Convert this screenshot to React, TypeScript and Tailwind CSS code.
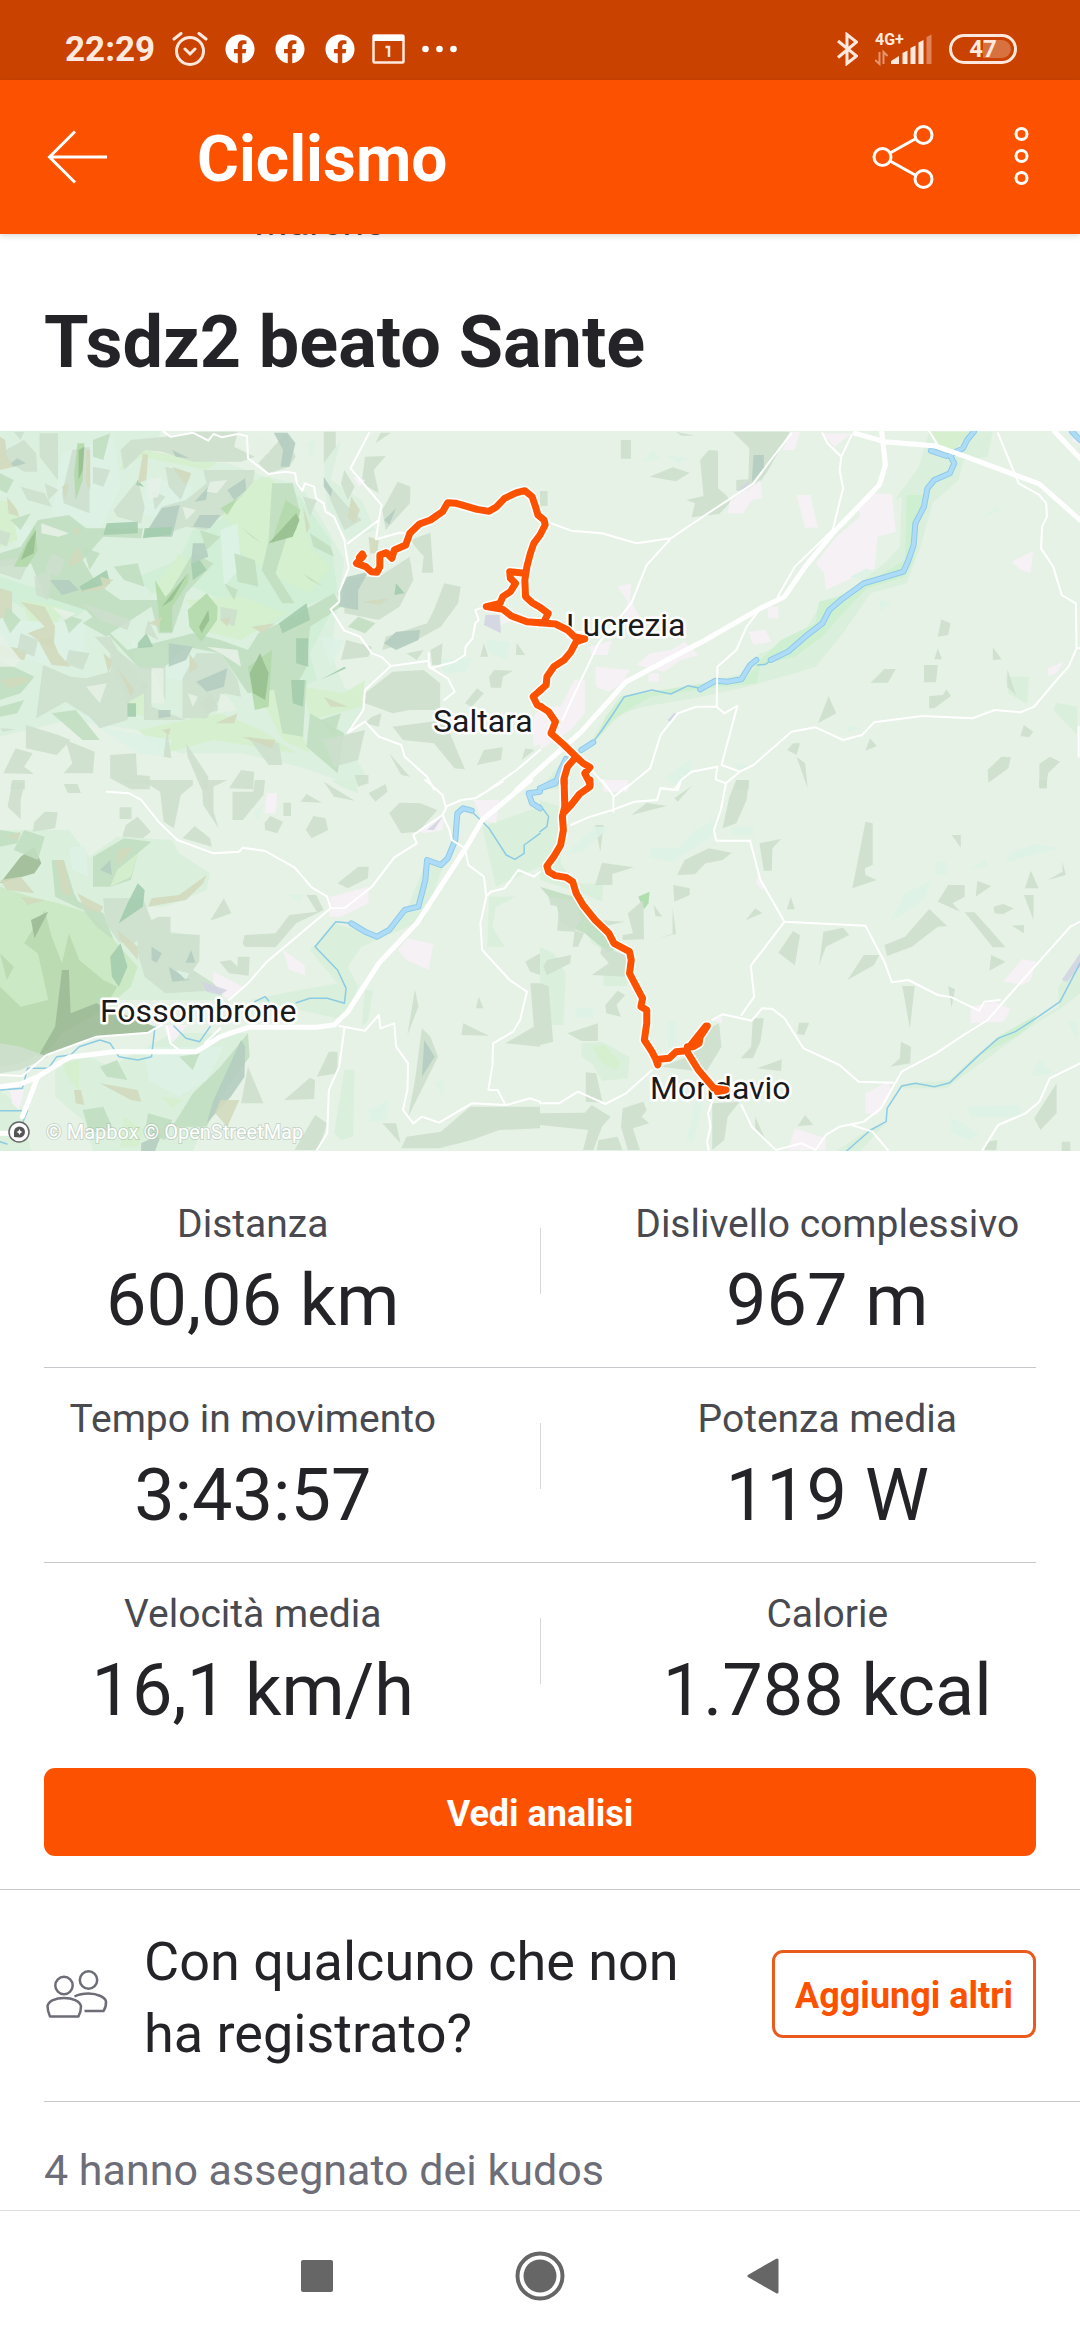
import type { ReactNode } from "react";
import { FaFacebook } from "react-icons/fa";

const stats = [
  [
    { label: "Distanza", value: "60,06 km" },
    { label: "Dislivello complessivo", value: "967 m" },
  ],
  [
    { label: "Tempo in movimento", value: "3:43:57" },
    { label: "Potenza media", value: "119 W" },
  ],
  [
    { label: "Velocità media", value: "16,1 km/h" },
    { label: "Calorie", value: "1.788 kcal" },
  ],
];

/* ---------- Map data ---------- */

// The map is split in four tiles, each drawn in its own units.
type TileId = "nw" | "ne" | "sw" | "se";

const tiles: Record<TileId, string> = {
  nw: "translate(0 -11) scale(0.34439 0.33333)",
  ne: "translate(540 -11) scale(0.34439 0.33333)",
  sw: "translate(0 349) scale(0.34439 0.33333)",
  se: "translate(540 349) scale(0.34439 0.33333)",
};

const FOREST = "#cddfcd";
const SAGE = "#c1dec1";
const TEAL = "#b4cdc0";
const LEAF = "#b3d9ab";
const MOSS = "#a3ccad";
const MINT = "#ddf2e6";
const LIME = "#d5efcd";
const GRASS = "#d8f0da";
const VALLEY = "#cdeecf";
const SAND = "#d2d9bd";
const URBAN = "#f6f1f6";
const LILAC = "#d3d5e2";

const land: { tile: TileId; fill: string; d: string }[] = [
  // north west hills
  { tile: "nw", fill: "#daf0df", d: "M0 33H470L430 110 660 130 770 170 870 190 930 290 1000 420 980 560 960 700 1000 800 1060 850 1000 960 1060 1060 1030 1108 980 1080 870 1040 700 1000 520 1000 400 930 200 900 0 950Z M940 130L990 60 960 180 1050 240 1090 330 1010 360 950 260Z" },
  { tile: "nw", fill: "#cfedd6", d: "M560 330L640 300 760 170 870 230 960 360 980 520 880 560 820 600 700 650 640 540 560 500 440 520 400 470 520 420Z M880 560L960 580 900 700 920 780 880 800 860 640Z M0 470L90 500 300 540 200 600 60 560 0 520Z" },
  { tile: "nw", fill: LIME, d: "M0 240L40 250 60 300 50 360 0 380Z M640 285L700 190 780 170 870 250 900 380 960 440 900 520 780 460 700 400 690 330Z M360 80L420 90 630 130 600 150 410 110 350 150Z M60 540L180 560 160 640 90 620Z M320 650L420 800 430 890 380 880 330 740Z M880 800L1000 820 1060 780 1050 860 900 900Z M450 500L520 400 560 440 520 500 460 560Z M540 540L700 530 830 580 700 660 610 640Z M120 350H190L240 400 170 470 110 440Z M790 700L870 780 860 900 900 1000 820 960 770 860Z M640 880L760 930 860 1000 620 960 480 1000 400 930Z" },
  { tile: "nw", fill: MINT, d: "M180 100L330 50 350 200 290 330 150 280Z M430 170L560 200 510 300 400 280Z M0 600L250 610 240 700 150 740 0 690Z M640 330L690 310 700 440 650 500Z M380 660L560 700 700 740 640 800 400 760Z M180 850L330 930 500 960 480 1010 400 1000Z M1270 720L1370 715 1355 755 1290 760Z M890 70L915 60 905 120Z M930 650L1000 660 960 740Z M1410 660L1480 665 1470 720 1420 700Z M40 300L100 330 60 400Z" },
  { tile: "nw", fill: SAGE, d: "M110 300L200 285 250 325 415 325 410 355 300 350 240 420 280 490 350 540 480 540 560 400 620 430 540 520 500 640 460 640 440 560 320 640 370 690 560 640 640 660 720 690 750 640 830 600 970 520 990 560 900 620 890 740 860 800 720 820 640 700 540 680 460 760 400 740 320 650 250 570 130 530 90 430 0 440V400L60 380Z M790 190L850 190 870 270 830 360 800 460 855 550 820 550 760 450 780 360Z M680 400L740 420 750 500 690 485Z M150 880L220 870 290 960 240 960Z M0 720L100 770 60 820 0 840Z M790 780L890 780 880 950 820 940Z M240 610L300 570 360 600 310 650Z M900 880L1000 940 980 1060 890 980Z" },
  { tile: "nw", fill: FOREST, d: "M115 40H168V180L115 110Z M0 100L70 60 105 100 108 155H70L0 110Z M350 90L380 60 480 50 560 35 690 35 680 80 740 110 700 125 560 125 470 95 420 90 360 150Z M480 140L555 160 525 240 490 200Z M590 150L740 150 735 185 700 230 640 290 600 330 540 320 470 345 420 345 470 260 540 240 600 190Z M330 270L400 180 420 260 410 310 340 290Z M180 220L210 90 260 80V280L185 250Z M750 130L830 40 858 110 840 140 780 160Z M60 200L130 220 150 260 80 240Z M940 35H975V80L940 130Z M1060 110L1120 108 1085 150 1100 220 1050 190Z M1090 70L1135 38H1105Z M1110 270L1155 185 1192 200 1190 250 1120 330Z M1190 360L1250 338 1258 458H1225L1230 410Z M100 470L150 450 140 540 105 525Z M960 240L1000 330 1050 300 1010 260 950 190Z M0 420L90 410 60 480 0 460Z" },
  { tile: "nw", fill: FOREST, d: "M1290 490L1338 500 1330 550 1280 620 1210 660 1110 690 1120 650 1240 610 1260 570Z M1000 470L1100 470 1190 410 1200 480 1160 560 1100 600 1000 580Z M1060 850V820L1140 755 1230 750 1278 790V870H1190L1140 880Z M1250 690L1285 670 1280 735 1255 735Z M1350 850L1385 805 1405 820 1370 860Z M1420 770L1435 750 1490 752 1460 770 1455 803H1425Z M1405 670L1418 710 1395 710Z M1500 668L1525 705H1498Z M1385 1035L1405 990 1460 982 1455 1020Z M1515 1020L1525 985 1552 990Z M1140 920L1290 900 1350 1048 1320 1045 1260 970 1170 960Z M1080 890L1108 880 1100 920 1060 910Z M1130 1000L1190 1070 1165 1065Z M1005 660L1080 680 1070 710 990 720Z" },
  { tile: "nw", fill: FOREST, d: "M125 735L205 770 250 775 320 755V700L275 650H320L340 690 400 740 480 740V840L440 735V860L540 900H418V820L375 845 370 900 290 925 260 890 190 845 105 895Z M530 775L570 700 640 700 690 780 700 830 650 820 600 895H530Z M75 915L170 945 205 960 165 1005 75 985Z M190 960L275 995 270 1060 185 1060 210 1030Z M10 1060L45 985 95 1000 70 1040 98 1062Z M320 1005L395 1000 398 1065 435 1068V1108H380L320 1075Z M540 970L605 1070 605 1108H585L545 1010Z M665 1105L700 1050 738 1055 735 1108Z M30 1108L35 1080H72V1108Z M485 930L498 1015 475 1010Z M720 950L810 970 820 1035 780 1035Z M940 960L1060 930 1040 1020 970 1040Z M1030 1065H1070V1090L1040 1100Z M240 550L380 600 370 630 290 600Z" },
  { tile: "nw", fill: TEAL, d: "M795 38H835L858 70 840 140H815L822 90Z M435 320L470 265 522 255 500 350 415 350Z M565 245L605 200 598 240Z M660 210L712 175 715 210 680 240Z M560 320L580 285 640 285 610 325Z M985 560L980 520 1010 470 1070 455 1040 510 1040 570Z M1115 670L1150 635 1220 630 1215 660 1150 690Z M145 480L200 480 230 510 180 525Z M25 135L50 115 75 130 40 140Z M560 370L595 370 605 410 555 430Z M570 785L660 745 650 800 600 815Z M460 870H495V890L460 895Z M500 90L550 115 510 110Z M940 170L965 210 960 230 940 200Z M490 670L560 680 540 720 490 740Z M1115 300L1150 265 1130 315Z" },
  { tile: "nw", fill: MOSS, d: "M310 310L400 305V340L300 345Z M420 325L500 320 495 345 415 355Z M230 500L310 450 320 490 240 515Z M555 430L580 420 600 450 560 480Z M810 610L890 550 900 600 820 640Z M860 655H895V740L860 730Z M845 780H885L880 860 850 850Z M370 850H395V890H370Z M400 670L425 640 445 680 400 685Z M930 780L1000 740 1005 745Z M1150 490L1175 520 1145 525Z M400 180L418 200 395 195Z" },
  { tile: "nw", fill: LEAF, d: "M225 70L245 70 240 180 220 240 215 160Z M640 265L690 235 660 285Z M830 240L872 270 860 330 790 370 800 330Z M450 480L480 530 550 460 545 490 500 560V635H465L460 570Z M545 570L600 520 632 560 630 600 585 665 550 620Z M720 740L790 690 780 860 740 870Z M40 440L100 320 110 390 80 440Z" },
  { tile: "nw", fill: "#97bf90", d: "M780 370L860 280 870 300 850 350Z M755 700L780 760 770 840 735 820 725 760Z M470 560L545 460 500 540Z M578 620L605 570 608 600 585 640Z M228 90L245 80 240 150 228 180Z M80 370L105 330 98 400 60 420Z" },
  { tile: "nw", fill: SAND, d: "M0 50L15 60 20 110 40 140 0 150Z M415 100L430 105 425 180 400 190Z M250 90H262V210L250 190Z M180 200L200 190 190 240Z M500 140L555 160 540 195Z M0 505L35 515V595H0Z M60 545L130 560 160 620 155 690 80 640 130 620Z M0 675L80 690 70 720 0 710Z M205 410L230 380 240 420 200 440Z M1020 230L1045 270 1030 310 1010 290Z M1070 350L1100 360 1095 400 1075 400Z M225 515L320 490 300 510Z M625 910L690 880 680 910Z M700 950L800 960 790 985Z M940 830L1010 860 960 860Z M340 740L390 810 380 830Z M550 700L575 740 550 760Z M1050 545L1130 535 1100 555Z M20 230L50 270 55 290 25 280Z" },
  // loose woods scattered over the hills
  { tile: "nw", fill: SAGE, d: "M0 160L40 180 20 220 0 210Z M270 60L320 40 300 120 270 110Z M30 300L90 280 60 330Z M700 320L760 370 730 350Z M900 340L960 380 970 410 910 380Z M650 490L690 510 680 540Z M880 460L940 500 900 480Z M180 580L240 600 200 640Z M20 560L60 600 30 640 10 600Z M330 440L400 430 420 500 360 480Z M580 330L640 350 600 390Z M930 900L990 880 970 950Z M0 860L70 840 50 880 0 890Z M240 380L290 400 260 450Z M1040 590L1090 610 1060 640 1010 620Z" },
  { tile: "nw", fill: FOREST, d: "M40 35H70L60 60Z M130 190L170 210 140 240Z M270 140L320 150 300 200 270 190Z M440 210L480 230 450 270Z M0 330L30 340 20 380 0 370Z M150 400L190 420 170 470 130 450Z M430 600L460 660 420 640Z M640 560L690 570 680 620 640 600Z M200 690L260 700 240 750 190 730Z M60 640L110 660 100 710 50 690Z M580 850L610 820 640 870 600 880Z M0 925L45 928 10 935Z M880 230L920 240 900 290Z M400 780L430 790 420 820Z M1180 700L1230 690 1210 720Z M1000 150L1030 200 1010 240 990 190Z" },
  { tile: "nw", fill: "#e6f1e6", d: "M740 50L790 60 780 100 745 110Z M430 180L470 170 460 230 430 240Z M610 185L660 180 630 220 600 215Z M530 260L570 270 540 300Z M120 310L200 340 170 350 120 340Z M250 800L310 790 290 850Z M640 820L660 830 690 870 630 880Z M545 820L575 830 560 860Z M150 560L220 580 190 600Z M0 640L60 720 40 740 0 740Z M600 680L690 690 700 740 640 700Z M1190 400L1230 405 1225 430 1190 425Z M440 745H475V850H440Z" },
  { tile: "nw", fill: SAND, d: "M110 660L150 650 170 700 205 740 150 735Z M430 610L470 590 460 620Z M210 320L235 330 220 350Z M0 780L60 770 90 780 30 805Z M300 700L325 720 315 760Z M880 260L900 320 890 340Z M640 600L670 590 660 620Z M730 620L800 610 760 640Z M470 930L495 925 490 945Z M290 470L330 480 300 500Z" },
  { tile: "nw", fill: URBAN, d: "M1025 170L1060 180 1045 200Z M1455 575L1490 600 1455 615Z M1545 900L1568 860V970L1550 980Z" },
  { tile: "nw", fill: LILAC, d: "M1410 585H1450L1455 640 1405 615Z" },

  // north east plain
  { tile: "ne", fill: GRASS, d: "M1130 35H1315L1300 110 1230 120 1215 180 1140 250 1105 380 1065 490 960 520 880 640 800 740 740 760 600 800 470 830 300 860 240 880 180 940 120 1000 60 1108H0L60 1030 150 960 230 830 470 790 590 760 640 700 760 650 810 560 900 510 1000 430 1045 380 1050 230 1030 240 1100 140Z M1350 770H1420L1415 852 1360 820Z M1500 848L1560 860V945L1490 870Z" },
  { tile: "ne", fill: VALLEY, d: "M1065 225H1115L1095 310 1085 420 1060 470 950 505 870 590 820 650 740 710 620 740 700 660 800 610 810 545 900 520 1060 420Z M240 830L420 800 600 770 640 730 630 790 480 805 320 830 210 900 165 960 190 890Z" },
  { tile: "ne", fill: LIME, d: "M1135 35H1245L1200 95 1160 80Z" },
  { tile: "ne", fill: FOREST, d: "M235 60H264V116H235Z M560 35H725L660 155 640 185 610 210 570 212V180L605 178 608 85Z M318 170L385 142 435 158 395 184Z M465 120L490 90 517 92V205L540 225 555 245 520 282 440 292 450 250 425 240 475 228Z M0 213H22V258H0Z M395 35L450 47H410Z M1165 598L1192 610 1185 645 1155 650Z M1155 685L1167 718H1145Z M1315 682L1340 718 1315 720Z M960 788L1000 747H1033L1010 788Z M1115 735H1155L1150 787H1115Z M1130 828L1170 825 1180 808 1193 828 1145 865H1130Z M838 828L860 880 807 910Z M735 970L755 970 745 1005 718 990Z M745 1010L770 1030 777 1105Z M958 955L978 978 945 992Z M1405 915L1432 935 1420 952 1395 948Z M1300 1050L1340 1010 1367 1012 1360 1045 1302 1088Z M1450 1032L1480 1010 1510 1025 1475 1060 1470 1105H1450Z M1357 748L1382 825 1357 800Z M570 1080H606V1108H570Z" },
  { tile: "ne", fill: TEAL, d: "M620 105H650V145L615 185Z" },
  { tile: "ne", fill: URBAN, d: "M730 35H755L740 90H705Z M820 40H905L855 80Z M640 180L645 235 615 240 590 280H545L550 245Z M745 225H785L807 323H769Z M960 220L1022 222 1033 335 980 350 972 445 830 510 825 460 800 430 860 350 930 290 920 255Z M225 500L265 490 262 540 290 590 240 605 255 545Z M660 560H692V595H664Z M605 635L655 630 672 665 620 675Z M145 680L210 660 195 705H150Z M280 735L320 700 380 690 420 665 460 705 410 720 360 755Z M160 740L260 750 240 790 200 815 162 800Z M315 760H345V785H315Z M130 780V880L90 930 0 990V860H60L100 780Z M1370 425L1432 393 1425 458 1395 450Z M1475 745L1520 725 1500 760 1475 768Z M175 1085L240 1090 200 1108Z M1540 60L1568 50V75Z" },
  { tile: "ne", fill: LILAC, d: "M370 900L390 878 400 882 380 908Z M570 212L610 180 600 205Z" },
  { tile: "ne", fill: MINT, d: "M295 125L330 90 350 118Z M360 105L430 115 400 128Z M1290 290L1325 258 1338 270Z M900 470L950 445 965 455 935 480Z M985 540L1020 545 990 575Z M360 1075L440 1015 435 1070 400 1095Z M560 1030L610 1040 580 1050Z M890 915L930 925 895 935Z" },

  // south west, Fossombrone hills
  { tile: "sw", fill: GRASS, d: "M0 150H200L260 230 340 170 500 180 520 220 610 280 600 330 480 380H400L420 440 580 470V540L560 570 650 630 640 660H300L150 800 60 860 0 880Z M160 870L240 820 320 860 500 760H720L660 920 600 1010 560 1113H270L240 1020 160 950Z M970 430L1100 470 1180 390 1240 240 1290 250 1230 420 1050 500 1010 560 1040 620 1000 720 870 690 730 660 820 640 980 610 940 560 900 510Z M1400 140L1568 80V260L1440 320Z M1420 350H1500L1440 380 1430 440 1465 500H1415Z M0 930L60 980 90 1113H0Z M1000 870H1030L1025 1070 990 1080 970 1060Z M1060 630H1083L1070 720 1050 740Z M960 0H1030L1040 40 990 20Z" },
  { tile: "sw", fill: "#cae8c2", d: "M0 320L90 350 170 370 260 400 330 480 400 560 380 620 300 690 200 740 130 820 0 850Z" },
  { tile: "sw", fill: "#b9d9b0", d: "M130 390L150 470 180 550 200 460 230 540 300 600 340 620 300 690 180 760 150 800 60 850 0 860V620L60 680 140 660 110 520 70 490Z M0 520L40 560 20 600Z" },
  { tile: "sw", fill: "#9dba96", d: "M180 570H200L205 700 280 670 450 740 430 760 280 770 150 820 110 830 160 740Z M60 230L100 200 120 250 100 280 0 310 30 270Z M90 420L140 395 100 475Z" },
  { tile: "sw", fill: SAGE, d: "M270 230L360 175 440 185 400 220 380 300 320 320 270 320Z M70 150L130 170 110 240 40 210Z M150 240H185L215 340 240 390 160 350Z M560 940L640 860 720 760 725 830 660 920 600 1040 500 1040Z M0 150L60 160 50 190 0 200Z M220 360L300 400 330 480 280 440Z" },
  { tile: "sw", fill: FOREST, d: "M300 355H415L445 435 385 495 345 485 305 425Z M400 440L460 410H495V460L580 465 578 545 560 570 650 630 480 640 420 590 400 520Z M0 790L60 800 140 830 60 870 0 880Z" },
  { tile: "sw", fill: TEAL, d: "M440 500L470 520 455 548 440 540Z M490 560L550 600 500 605Z M555 510L567 548H539Z M700 780L712 800 710 890 670 950 600 1030 620 960Z M410 1090L470 1060 450 1113H410Z M290 270L320 240 325 285Z" },
  { tile: "sw", fill: MOSS, d: "M345 430L370 370 400 310 420 330 415 380Z M320 530L350 490 370 560 345 620 325 590Z" },
  { tile: "sw", fill: SAND, d: "M440 355L520 345 600 285 590 310 540 360 430 380Z M160 240L185 240 210 350 180 340Z M225 340L300 380 290 400 245 385Z M215 930H235L245 975 220 970Z M290 910L400 930 410 965 380 960Z M640 960H695L660 1040 625 1000Z M340 210L390 200 340 260Z M340 450L400 500 400 540 350 480Z M60 350L130 360 80 375Z M20 170L60 155 50 180Z M0 300L60 290 100 340 20 330Z" },
  { tile: "sw", fill: LIME, d: "M340 270L400 220 380 290 320 320Z M470 950L530 960 500 985Z M180 850L230 840 230 930 200 900Z M360 1010L420 1050 400 1100 350 1100Z" },
  { tile: "sw", fill: MINT, d: "M420 800L650 800 600 900 520 950 430 900Z M200 200L250 200 255 290 210 270Z M735 100L765 70 750 120Z M835 345L880 345 870 370Z M1265 910L1290 900 1285 950Z M1070 990L1130 960 1120 1020 1075 1030Z M510 570L550 580 540 600Z" },
  { tile: "sw", fill: SAGE, d: "M290 860L340 840 370 900 310 890Z M240 990L300 980 330 1050 260 1060Z M430 1000L500 1020 480 1080 420 1060Z M520 830L580 820 560 870Z" },
  { tile: "sw", fill: FOREST, d: "M35 10H72L60 60V118L22 80Z M185 12H225L235 39H197Z M345 0H560V15L525 45 505 145 475 125 465 35 425 10H370Z M585 0H660L620 20V95L635 145 590 75Z M675 35H735L740 0H770L765 45 705 120H675Z M823 68H845V108H823Z M873 65L890 42 935 68Z M768 130L785 108 822 125 805 160 770 150Z M888 150L910 108 945 115 953 150 905 175Z M940 5L1030 62 970 50Z M1070 40L1120 12 1125 35 1090 65Z M1130 100L1160 68 1220 70 1270 90 1215 155 1165 160Z M100 125L130 95 168 97 160 145 95 155Z M347 82H382V117H347Z M365 135L400 110 438 155 415 175 355 170Z M530 175L565 138 610 175 615 200Z M980 310L1040 260H1071L1068 295 1010 325Z M610 422L650 355 672 400Z M705 490L710 465 800 460 840 405 920 395 890 345H918L940 390 860 430 800 502 710 500Z M637 545L670 540 690 560V530H725L722 587 665 580Z" },
  { tile: "sw", fill: FOREST, d: "M1205 628L1215 680 1183 765Z M1390 650L1404 685H1382Z M1345 730L1420 767 1340 765Z M1225 745L1250 770 1272 830 1185 1010 1205 900Z M920 890L955 815H980V880Z M825 960L900 893 915 900 912 957Z M1525 545L1568 520V585L1540 575Z M1467 790L1550 740 1540 610H1568V800Z M1365 980H1568V1045L1450 1050 1370 1080 1275 1105H1165L1180 1070 1280 1055Z M915 1005L950 1030 925 1110H855Z M1110 1030H1150L1163 1090Z M720 860L765 970H700Z" },
  { tile: "sw", fill: TEAL, d: "M1232 780L1262 830 1225 890Z" },
  { tile: "sw", fill: URBAN, d: "M775 40H805L800 100H768Z M620 575L705 620 660 660 620 610Z M820 510L885 555V585L840 570Z M960 350L1070 320V370L990 410H955Z M1155 510L1185 475 1258 492 1245 570 1180 540Z M1375 60H1450L1440 130 1400 120Z M1215 150L1290 110 1285 150 1230 160Z M30 930H70L55 990 35 970Z M475 735H545L495 795Z" },
  { tile: "sw", fill: LILAC, d: "M585 605L660 630 640 645 600 635Z M1240 150L1285 110 1260 150Z" },

  // south east plain
  { tile: "se", fill: GRASS, d: "M0 60L60 80 60 250 100 310 185 312 180 365 120 340 0 300Z M0 500L40 520 75 580 68 735H30L20 620 0 610Z M185 570H255V618H185Z M120 790L180 785 260 830 255 895 180 903 150 850 120 830Z M130 430L235 480 230 540 150 490Z M1568 540L1505 620 1505 680 1350 780 1260 830 1190 900 1050 912V925H1180L1280 850 1440 730 1520 680 1568 640Z M860 1113L960 1045 1000 1035 930 1113Z" },
  { tile: "se", fill: VALLEY, d: "M1440 705L1330 770 1270 830 1390 765 1435 725Z" },
  { tile: "se", fill: LIME, d: "M150 800L190 795 235 850 220 870 180 850Z" },
  { tile: "se", fill: "#a9dba9", d: "M285 350L318 335 315 370 302 388Z" },
  { tile: "se", fill: SAGE, d: "M0 320L80 345 110 350 150 420 230 500 200 520 130 460 60 430 50 380Z" },
  { tile: "se", fill: FOREST, d: "M550 50L570 0H607L600 60 570 130 530 145Z M160 135H185L175 215Z M180 248L272 262 210 282V315H160Z M265 105L310 68 368 78Z M390 55L445 15 430 30 400 65Z M398 285L420 240 490 205 557 218 530 240 480 250 450 283Z M637 190L700 177 675 205 673 272H650Z M945 125L966 130V255L943 265 945 285 978 300 907 325Z M1195 165H1222V203Z M1185 315H1233V350L1198 370 1220 395 1155 365Z M1270 303L1310 318 1265 350Z M1425 272L1448 325H1408Z M1475 300L1517 275V245L1527 285Z M1405 345H1433V420Z M1317 380L1345 372 1375 385 1345 403 1320 400Z M1233 397H1262L1352 502H1315Z M1000 495L1060 470 1130 387 1182 438 1155 440 1080 500 1008 528Z M1370 437L1405 435V460Z M1310 525L1352 545 1305 572Z M387 315L435 325V345L390 365Z M728 350L740 388H717Z M598 420L625 385 645 400Z M735 453L755 465 740 556 692 518Z M823 455L880 443 898 465 830 500 810 557Z M893 600L940 525H985L970 555Z M1052 618H1088L1074 746Z M1185 618L1205 628 1195 683Z" },
  { tile: "se", fill: FOREST, d: "M1048 785L1077 800 1075 850 1017 860 1045 835Z M752 728H782L767 766 747 761Z M618 715H650L640 785 618 835H583L613 800Z M80 760L168 730V783H120Z M133 877L163 880 182 968 133 965Z M0 610L25 618 38 785 0 795Z M190 675L225 632 247 645 222 675 235 710 192 700Z M630 865L702 838 700 873Z M500 740L520 730 527 800 480 880 430 870 350 860 430 830Z M770 1005L793 1035 748 1038Z M1435 1015L1500 910V1000L1453 1050Z M1300 1085L1328 1080 1325 1110H1290Z M1515 1085H1540V1113H1515Z M625 1010L653 1075 625 1050Z M0 1000L130 998 150 975 205 1010 180 1040 155 1110H125L140 1050 0 1035Z M240 985L300 965 310 990 295 1010 317 1030 270 1045 290 1110H255L235 1040Z M170 1080L225 1070 240 1110H165Z M500 970L580 965 545 1010 535 1080 500 1110Z M25 350L100 360 120 420 100 450 128 460 110 500H95L100 455 50 452 55 380 30 375Z M255 400L300 360 302 478 240 480V465L270 460Z M170 420L245 425 180 440Z M180 500L260 530 255 590 150 585 200 550 175 520Z M20 540L90 525 88 550 50 570 20 585 10 560Z M345 473L385 462V385L395 462Z M330 375L355 410 335 408Z M1450 0H1472V25H1450Z" },
  { tile: "se", fill: MINT, d: "M75 220L160 140H205L120 215Z M315 230L320 205H400L450 150 510 120 500 165 440 210 380 245Z M555 140H620V165H560Z M1350 250L1370 215 1435 192 1510 205 1430 225Z M1150 245H1180V285H1145Z M1020 420L1060 340 1135 303 1120 350 1060 400Z M1425 890L1450 838 1490 880Z M1240 980L1390 975 1400 1010H1250Z M1190 1010L1275 1060 1250 1080 1195 1060Z M370 725H392L397 785 372 805Z M105 685H155V713H105Z M425 1080L455 945 475 960 445 1085Z M1530 725H1560V780Z M1245 270L1290 237 1300 255Z" },
  { tile: "se", fill: URBAN, d: "M632 280L655 320 645 330 628 310Z M1345 605L1400 537 1440 545 1425 600 1400 615Z M1250 680L1320 665 1367 688 1345 725 1250 730Z M945 940L1010 905 1020 930 980 1005 945 1000Z M740 1045L830 1075V1110H720Z M180 0H255V35H185Z M500 720L528 708V730Z" },
  { tile: "se", fill: LILAC, d: "M1568 520L1515 600 1530 605 1568 560Z" },
];

const streams: { tile: TileId; d: string }[] = [
  { tile: "ne", d: "M670 720L655 733 632 735 M465 805L430 797 380 822 325 810 245 830 210 885 180 930 155 965" },
  { tile: "sw", d: "M1568 160L1522 195V220L1495 238 1470 225 1420 145 1375 100 M1020 430L975 425 915 500 980 570 1005 625 1000 670 950 655H900L860 668 M740 665L770 650 780 662 M505 738L540 775 580 785 610 740 M450 740L440 830 400 840 345 830 320 790 290 780 230 800 205 825 165 830 140 865H80L65 925 0 930 M0 992H80L65 1030 M0 1085L20 1092" },
  { tile: "se", d: "M0 75L25 110 20 140 0 155 M1568 550L1510 665 1440 715 1380 755 1330 775 1280 820 1190 908 1145 920 1090 910 1050 918 1008 985 1005 1025 960 1050 890 1113" },
];

const rivers: { tile: TileId; d: string }[] = [
  { tile: "ne", d: "M1260 35L1240 60 1228 85 1190 105 1203 130 1190 160 1145 180 1125 205 1115 260 1090 310 1085 375 1070 420 1055 455 990 475 940 490 880 535 840 570 820 610 770 650 720 695 670 720 M628 720L610 735 595 760 585 778 545 785 510 782 465 808 M155 967L120 990 M75 1017L60 1050 45 1090 0 1105 M1135 92L1180 108 M1545 35L1568 60" },
  { tile: "sw", d: "M1370 92L1345 85 1328 100 1322 180 1300 235 1280 255 1240 240 1235 300 1215 380 1175 390 1130 450 1095 470 1060 455 1020 430 M1568 35L1535 40 1545 70 1568 85" },
  { tile: "se", d: "M0 25L40 5" },
];

const roads: { tile: TileId; d: string }[] = [
  { tile: "nw", d: "M475 35L495 50 560 38 605 62 620 42 645 52 690 42 717 48 720 115 745 135 780 162 830 155 857 160 862 190 878 212 885 190 912 200 918 235 940 250 945 275 970 290 985 325 1000 360 1005 400 1012 440 M1072 38L1018 145 1108 255 1100 300 1010 370 M1100 300L1092 358 1160 338 1185 340 M1012 445L985 515V545L960 568 1000 632 1045 650 1080 700 1110 712 1135 738 1060 810 1055 870 1010 938 1060 905 1100 950 1165 975 1175 1010 1240 1070 1260 1108 M1135 738L1245 722 1250 745 1320 725 1350 705 1352 680 1372 655 1380 610 1390 600 1380 570 1410 560 M1245 700V740L1300 775 1320 815 1290 840 M1568 990L1500 1050 1420 1108" },
  { tile: "ne", d: "M20 305L90 332 180 340 280 370 380 355 480 285 620 190 670 120 730 40 M380 355L310 435 265 550 170 670 110 800 65 900 M820 40L835 70 875 110 870 150 880 205 850 330 M905 45L875 110 M640 565L600 620 570 690 515 740 513 860H455L400 880 350 945 320 1045 245 1108 M513 860L535 880 573 858 527 1035 580 1055 620 1035 730 935 800 922 880 960 935 945 970 907 1110 888 1255 895 1320 870 1395 877 1435 860 1500 780 1535 740 1558 685 1556 550 1515 525 1490 440 1455 385 1458 320 1472 290 1470 250 1450 225 1390 190 1330 40 M1130 33L1155 75 M580 1055L540 1090 510 1078 515 1040 440 1055 410 1080 400 1110 350 1105 M1558 685H1568 M150 1050L200 1108 M850 330L740 440 690 530 M1564 920V1010" },
  { tile: "sw", d: "M310 35L375 40 410 60 460 125 515 180 620 220 695 215 705 203 770 213 855 262 905 322 950 350 960 385H1000L1080 320 1145 232 1210 190 1200 165 1285 105 M960 385L775 545 720 610 665 660 M1235 0L1285 45 1295 85 1285 105 1305 150 1312 180 1350 205 1360 255 1405 290 1412 350 1395 430 1400 510 1480 600 1530 635 1510 720 1490 755 1432 790 1430 855 1418 930 1445 930 1465 970 M1295 80L1340 60 1380 55 1460 5 M1412 350L1425 335 1465 325 1505 270 1550 290 1568 275 M985 738L1060 752 1100 705 1105 745 1145 730 1150 800 1185 850 1183 930 1170 990 1200 1030 1225 1010 1275 1028 1370 970 1470 975 1540 955 1568 965 M1000 745L985 860 955 930 950 1060 920 1110 M0 885L65 888 135 825 280 770 430 758 470 735 M485 740L495 790 520 810 M595 790L640 745" },
  { tile: "se", d: "M540 10L525 90 505 150 512 182H610L640 300 710 425 945 437 1000 545 1022 607 1070 600 1155 645 1195 652 1275 692 1290 665 1335 660 M710 425L612 557 622 650 585 705 M500 720L530 703 570 712 615 722 645 685 675 687 710 715 765 805 870 855 925 905 1025 908 M1568 425L1540 440 1350 660 1300 720 1230 765 1150 820 1050 875 990 985 940 1025 870 1040 830 1065 800 1110 M905 1035L965 1055 1010 1110 M1568 850L1480 895 1450 965 1410 1000 1330 1035 1285 1110 M325 870L250 940 190 972 110 935 55 970H0 M500 965L488 1000 495 1040 485 1085 490 1110 M585 975L615 1040 685 1110 760 1090 800 1110 M90 135L140 112 210 90 275 65 340 60 350 25 390 30 410 0 M180 0L215 50 250 20 M213 50V95" },
];

const highways: { tile: TileId; d: string }[] = [
  { tile: "nw", d: "M1568 1045L1500 1110" },
  { tile: "ne", d: "M915 40L1000 65 1150 78 1250 115 1450 192 1568 300 M992 33L1003 135 985 195 850 340 770 440 710 530 640 565 480 660 250 785 120 935 0 1045 M1495 35L1568 115" },
  { tile: "sw", d: "M1540 0L1400 120 1355 200 1210 430 1100 550 1010 695 970 735 920 742H720L640 770 570 815H330L200 832 110 890 60 912 0 920 M110 890L65 1010 M0 1060H40" },
];

const route: { tile: TileId; d: string }[] = [
  { tile: "nw", d: "M1052 402L1044 412 1055 408 1035 430 1062 440 1078 455 1095 457 1103 440V405L1122 398 1138 415 1145 390 1178 375 1190 340 1218 312 1250 300 1285 275 1300 248 1325 250 1385 268 1420 274 1440 262 1465 235 1500 218 1524 212 1545 230 1555 260 1562 285 1580 300 1583 315 1568 345 1550 370 1540 400 1530 440 1524 480 1526 530 1545 548 1568 562 1592 580 1582 600 M1524 460L1480 455 1482 475 1497 490 1482 515 1460 530 1452 550 1412 560 1460 568 1485 588 1530 605 1568 608 M1568 812L1548 830 1560 855 1572 860" },
  { tile: "ne", d: "M0 608L45 612 80 630 100 650 130 657 105 665 90 695 70 720 40 740 20 770 18 795 0 812 M2 860L25 875 45 905 32 940 70 975 105 1010 80 1040 70 1075V1090 M105 1010L125 1030 145 1042 130 1060 145 1090V1095" },
  { tile: "se", d: "M70 0L72 80 65 110 68 150 60 195 40 230 20 258 25 275 45 287 75 292 95 305 105 340 125 375 160 420 200 460 215 490 260 515 265 540 260 580 280 620 298 655 293 680 310 690V730L303 780 325 815 335 835 342 855 345 838 375 835 395 815 425 812 482 738 486 738 465 770 462 790 445 800 428 800 M425 812L460 870 505 925 540 930 515 935 M145 0V20L115 42 90 75 72 95" },
];

const places = [
  { name: "Lucrezia", x: 566, y: 205 },
  { name: "Saltara", x: 433, y: 301 },
  { name: "Fossombrone", x: 100, y: 591 },
  { name: "Mondavio", x: 650, y: 668 },
];

function Lines({ items, stroke, width }: { items: { tile: TileId; d: string }[]; stroke: string; width: number }) {
  return (
    <g fill="none" stroke={stroke} strokeWidth={width} strokeLinecap="round" strokeLinejoin="round">
      {items.map((item, i) => (
        <path key={i} d={item.d} transform={tiles[item.tile]} vectorEffect="non-scaling-stroke" />
      ))}
    </g>
  );
}

function RouteMap() {
  return (
    <svg viewBox="0 0 1080 720" className="block w-full" role="img" aria-label="Mappa del percorso">
      <rect width="1080" height="720" fill="#e7f2e7" />
      {land.map((area, i) => (
        <path key={i} d={area.d} fill={area.fill} fillOpacity="0.9" transform={tiles[area.tile]} />
      ))}
      <Lines items={streams} stroke="#8ccbe3" width={1.5} />
      <Lines items={rivers} stroke="#8ccaea" width={6} />
      <Lines items={rivers} stroke="#aedcf7" width={4} />
      <Lines items={roads} stroke="#ffffff" width={2} />
      <Lines items={highways} stroke="#ffffff" width={5} />

      <g className="font-['Roboto']" fontSize="32" fill="#1a1a1a" stroke="#ffffff" strokeWidth="5" strokeLinejoin="round" paintOrder="stroke">
        {places.map((place) => (
          <text key={place.name} x={place.x} y={place.y}>
            {place.name}
          </text>
        ))}
      </g>

      <Lines items={route} stroke="#ffffff" width={10} />
      <Lines items={route} stroke="#fc5200" width={7} />

      {/* Attribution */}
      <circle cx="19" cy="701" r="10" fill="#ffffff" stroke="#666666" strokeWidth="1.5" />
      <path d="M14 706v-5a5.500 5.500 0 1 1 5.500 5.500z" fill="#555555" />
      <path d="M19.500 698l1 2 2 1-2 1-1 2-1-2-2-1 2-1z" fill="#ffffff" />
      <text x="46" y="708" className="font-['Roboto']" fontSize="20" fill="#ffffff" stroke="#9fb3a5" strokeOpacity="0.45" strokeWidth="2" paintOrder="stroke">
        © Mapbox © OpenStreetMap
      </text>
    </svg>
  );
}

/* ---------- Bars ---------- */

function StatusBar() {
  return (
    <div className="flex h-20 items-center justify-between bg-[#ca4200] pt-[18px] pr-[63px] pl-[65px] text-[#ffe9de]">
      <div className="flex items-center gap-[17px]">
        <span className="text-[35px] leading-none font-bold">22:29</span>
        <svg width="36" height="34" viewBox="0 0 36 34" fill="none" stroke="currentColor" strokeWidth="3" strokeLinecap="round">
          <circle cx="18" cy="19" r="13.500" />
          <path d="M2 7L9 1.500M34 7L27 1.500M13 17l5 5 5-5" />
        </svg>
        <div className="flex gap-5 text-white">
          <FaFacebook size={30} />
          <FaFacebook size={30} />
          <FaFacebook size={30} />
        </div>
        <svg width="33" height="30" viewBox="0 0 33 30" fill="none" stroke="currentColor">
          <rect x="1.500" y="1.500" width="30" height="27" rx="1" strokeWidth="2.500" />
          <path d="M1 4h31" stroke="#ffffff" strokeWidth="6" />
          <path d="M13.500 13H17v10" strokeWidth="2.500" />
        </svg>
        <svg width="35" height="8" viewBox="0 0 35 8" fill="#ffffff">
          <circle cx="3.500" cy="4" r="3.300" />
          <circle cx="17.500" cy="4" r="3.300" />
          <circle cx="31.500" cy="4" r="3.300" />
        </svg>
      </div>
      <div className="flex items-center gap-[17px]">
        <svg width="21" height="34" viewBox="0 0 21 34" fill="none" stroke="currentColor" strokeWidth="3">
          <path d="M1 9l18.500 15L10 31.500V2.500L19.500 10 1 25.500" />
        </svg>
        <svg width="57" height="48" viewBox="0 -8 57 48" fill="currentColor">
          <text x="0" y="12" fontSize="16" className="font-['Roboto'] font-bold">
            4G+
          </text>
          <path d="M4.500 19v12L0 27M8.500 31V19l4 4" fill="none" stroke="currentColor" strokeWidth="2" opacity="0.5" />
          <path d="M16 31v-3l8-5v8zM27.500 31V20l5-2.500V31zM35.500 31V15l5-2.500V31zM43.500 31V9.500l5-2.500V31z" />
          <path d="M51.500 31V4l5-2.500V31z" opacity="0.4" />
        </svg>
        <div className="relative flex h-[30px] w-[68px] items-center justify-center rounded-full border-3 border-current">
          <span className="absolute inset-y-[3px] right-[3px] w-7 rounded-r-full bg-white/25" />
          <span className="relative text-2xl leading-none font-bold">47</span>
        </div>
      </div>
    </div>
  );
}

function AppBar() {
  return (
    <header className="relative z-10 flex h-[154px] items-center bg-[#fc5200] pr-[51px] pl-[47px] text-white shadow-[0_2px_6px_rgba(0,0,0,0.15)]">
      <button aria-label="Indietro">
        <svg width="60" height="54" viewBox="0 0 60 54" fill="none" stroke="currentColor" strokeWidth="3">
          <path d="M28 1.500L2.500 27 28 52.500M2.500 27H60" />
        </svg>
      </button>
      <h1 className="ml-[90px] flex-1 pt-1.5 text-[64px] leading-[74px] font-bold">Ciclismo</h1>
      <button aria-label="Condividi">
        <svg width="62" height="64" viewBox="0 0 62 64" fill="none" stroke="currentColor" strokeWidth="3">
          <circle cx="10.500" cy="32" r="8.500" />
          <circle cx="51.500" cy="10" r="8.500" />
          <circle cx="51.500" cy="54" r="8.500" />
          <path d="M18 28l26-14.500M18 36l26 14.500" />
        </svg>
      </button>
      <button aria-label="Altre opzioni" className="ml-20">
        <svg width="15" height="60" viewBox="0 0 15 60" fill="none" stroke="currentColor" strokeWidth="3">
          <circle cx="7.500" cy="7" r="5.500" />
          <circle cx="7.500" cy="29" r="5.500" />
          <circle cx="7.500" cy="51" r="5.500" />
        </svg>
      </button>
    </header>
  );
}

function Stat({ label, value }: { label: string; value: string }) {
  return (
    <div className="flex flex-col items-center gap-3 pt-7 pb-6 whitespace-nowrap">
      <dt className="text-[39px] leading-[46px] text-[#494950]">{label}</dt>
      <dd className="text-[72px] leading-[84px]">{value}</dd>
    </div>
  );
}

function PeopleIcon() {
  return (
    <svg width="64" height="48" viewBox="-2 0 64 48" fill="none" stroke="#6d6d78" strokeWidth="2.500" strokeLinejoin="round" className="mt-11 shrink-0">
      <circle cx="18" cy="15.500" r="8.700" />
      <circle cx="42.500" cy="10" r="8.700" />
      <path d="M4 46.500C2 42 1.500 38 1.500 36c1-5 8-8 16.500-8s15.500 3 17 8c0 3-.5 7-2.500 10.500z" />
      <path d="M28.500 26.500c4-2 9-3 14-3 9 0 17 4 17.500 8 .2 3-.5 6.500-2.500 9.500H38.500" />
    </svg>
  );
}

function NavButton({ label, children }: { label: string; children: ReactNode }) {
  return (
    <button aria-label={label} className="flex size-[100px] items-center justify-center">
      {children}
    </button>
  );
}

export default function App() {
  return (
    <div className="flex min-h-screen flex-col bg-white font-['Roboto',sans-serif] text-[#242428]">
      <StatusBar />
      <AppBar />

      <main>
        {/* Tail of the location line, scrolled under the app bar */}
        <div className="flex h-[11px] items-end pl-[254px]">
          <p className="shrink-0 text-[39px] leading-[46px] text-[#494950]">Marche</p>
        </div>
        <h2 className="px-11 pt-14 pb-[46px] text-[72px] leading-[84px] font-bold">Tsdz2 beato Sante</h2>

        <RouteMap />

        <section className="px-11 pt-[22px] pb-[33px]">
          {stats.map(([left, right], i) => (
            <dl
              key={left.label}
              className={`grid grid-cols-[1fr_auto_1fr] gap-x-[78px] ${i < stats.length - 1 ? "border-b border-[#c8c8cc]" : ""}`}
            >
              <Stat {...left} />
              <div className="mt-[55px] h-[66px] w-px bg-[#d8d8dc]" />
              <Stat {...right} />
            </dl>
          ))}
          <button className="mt-[11px] h-[88px] w-full rounded-[11px] bg-[#fc5200] pt-1 text-[36px] font-bold text-white">
            Vedi analisi
          </button>
        </section>

        <section className="flex items-start border-t border-[#c8c8cc] px-11 pt-9 pb-[31px]">
          <PeopleIcon />
          <p className="mr-11 ml-9 flex-1 text-[54px] leading-[72px]">Con qualcuno che non ha registrato?</p>
          <button className="mt-6 h-[88px] w-[264px] shrink-0 rounded-[11px] border-3 border-[#e95a1c] pt-1 text-[36px] font-bold text-[#fc5200]">
            Aggiungi altri
          </button>
        </section>

        <section className="ml-11 border-t border-[#c8c8cc] pt-[42px] pb-3.5">
          <p className="text-[43px] leading-[52px] text-[#6d6d78]">4 hanno assegnato dei kudos</p>
        </section>
      </main>

      <nav className="mt-auto flex h-[130px] items-center justify-center gap-[123px] border-t border-[#e0e0e0] bg-white text-[#666666]">
        <NavButton label="Recenti">
          <svg width="32" height="32" viewBox="0 0 32 32" fill="currentColor">
            <rect width="32" height="32" rx="2" />
          </svg>
        </NavButton>
        <NavButton label="Home">
          <svg width="50" height="50" viewBox="0 0 50 50" fill="currentColor">
            <circle cx="25" cy="25" r="22.500" fill="none" stroke="currentColor" strokeWidth="4" />
            <circle cx="25" cy="25" r="16.500" />
          </svg>
        </NavButton>
        <NavButton label="Indietro">
          <svg width="32" height="38" viewBox="0 0 32 38" fill="currentColor" stroke="currentColor" strokeWidth="3" strokeLinejoin="round">
            <path d="M2 19L30 3v32z" />
          </svg>
        </NavButton>
      </nav>
    </div>
  );
}
